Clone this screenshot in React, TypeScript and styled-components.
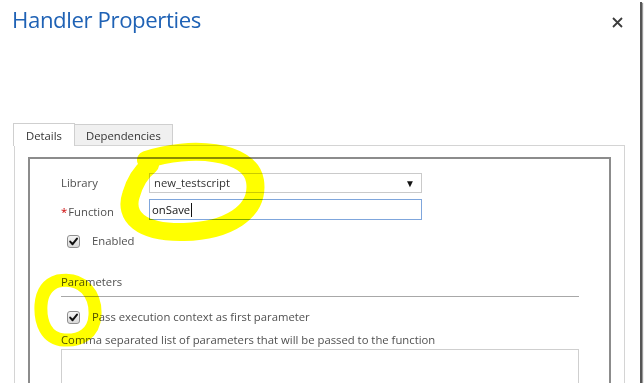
import styled, { createGlobalStyle } from "styled-components";

const GlobalStyle = createGlobalStyle`
   html, body {
      margin: 0;
      padding: 0;
      background: #ffffff;
   }
   body {
      font-family: "Open Sans", "Liberation Sans", sans-serif;
      color: #444444;
   }
`;

function CheckMark() {
   return (
      <svg width="11" height="11" viewBox="0 0 11 11">
         <path
            d="M2.2 5.6 L4.6 8.2 L9 2.6"
            fill="none"
            stroke="#111"
            strokeWidth="2"
            strokeLinecap="round"
            strokeLinejoin="round"
         />
      </svg>
   );
}

function CheckBox() {
   return (
      <Box>
         <CheckMark />
      </Box>
   );
}

function App() {
   return (
      <>
         <GlobalStyle />
         <Frame>
            <Header>
               <Title>Handler Properties</Title>
               <CloseButton aria-label="close">
                  <svg width="11" height="11" viewBox="0 0 11 11">
                     <path
                        d="M1 1 L10 10 M10 1 L1 10"
                        stroke="#3c3c3c"
                        strokeWidth="1.8"
                     />
                  </svg>
               </CloseButton>
            </Header>

            <Tabs>
               <Tab $active>Details</Tab>
               <Tab>Dependencies</Tab>
            </Tabs>

            <TabPanel>
               <Section>
                  <FieldRow>
                     <Label>Library</Label>
                     <Select>
                        <span>new_testscript</span>
                        <Arrow>▼</Arrow>
                     </Select>
                  </FieldRow>
                  <FieldRow>
                     <Label $low>
                        <Required>*</Required>Function
                     </Label>
                     <TextInput>
                        onSave
                        <Caret />
                     </TextInput>
                  </FieldRow>
                  <CheckRow>
                     <CheckBox />
                     <span>Enabled</span>
                  </CheckRow>

                  <Heading>Parameters</Heading>
                  <CheckRow $tight>
                     <CheckBox />
                     <span>Pass execution context as first parameter</span>
                  </CheckRow>
                  <Hint>
                     Comma separated list of parameters that will be passed to
                     the function
                  </Hint>
                  <TextArea />
               </Section>
            </TabPanel>

            <Marker width="640" height="383" viewBox="0 0 640 383">
               <path
                  d="M146 160 C 190 145, 250 150, 255 181 C 260 213, 226 231, 184 232 C 140 233, 124 216, 131 195 C 135 181, 141 172, 150 165"
                  fill="none"
                  stroke="#ffff00"
                  strokeWidth="18"
                  strokeLinecap="round"
                  strokeLinejoin="round"
               />
               <path
                  d="M58 281 C 84 276, 96 296, 95 315 C 94 334, 80 341, 64 340 C 46 339, 40 322, 41 305 C 42 292, 48 284, 58 281"
                  fill="none"
                  stroke="#ffff00"
                  strokeWidth="13"
                  strokeLinecap="round"
                  strokeLinejoin="round"
               />
            </Marker>
         </Frame>
      </>
   );
}

export default App;

const Frame = styled.div`
   position: relative;
   width: 640px;
   height: 383px;
   overflow: hidden;
   background: #ffffff;
   box-shadow: 2px 2px 0 #555555, 3px 3px 1px #9a9a9a;
`;

const Header = styled.div`
   display: flex;
   justify-content: space-between;
   align-items: flex-start;
   height: 123px;
   padding: 0 17px 0 12px;
   box-sizing: border-box;
`;

const Title = styled.h1`
   margin: 0;
   font-size: 22.2px;
   font-weight: 400;
   line-height: 39px;
   color: #1f62b5;
   letter-spacing: -0.4px;
`;

const CloseButton = styled.button`
   margin-top: 17px;
   padding: 0;
   border: none;
   background: none;
   width: 11px;
   height: 11px;
   line-height: 0;
`;

const Tabs = styled.div`
   display: flex;
   align-items: flex-end;
   margin-left: 13px;
   position: relative;
   z-index: 1;
`;

const Tab = styled.div<{ $active?: boolean }>`
   height: ${(p) => (p.$active ? "23px" : "21px")};
   padding: 0 ${(p) => (p.$active ? "12px" : "11px")};
   margin-bottom: ${(p) => (p.$active ? "-1px" : "0")};
   display: flex;
   align-items: center;
   font-size: 11.3px;
   color: #333333;
   background: ${(p) => (p.$active ? "#ffffff" : "#f0f0f0")};
   border: 1px solid #cfcfcf;
   border-bottom: none;
   border-left: ${(p) => (p.$active ? "1px solid #cfcfcf" : "none")};
   box-sizing: border-box;
`;

const TabPanel = styled.div`
   margin: 0 15px 0 14px;
   padding: 11px 13px 0 13px;
   border: 1px solid #d4d4d4;
   border-bottom: none;
   height: 300px;
`;

const Section = styled.div`
   border: 2px solid #8c8c8c;
   border-bottom: none;
   height: 300px;
   padding: 14px 30px 0 31px;
   font-size: 11.3px;
   line-height: 16px;
`;

const FieldRow = styled.div`
   display: grid;
   grid-template-columns: 88px 273px;
   align-items: center;
   margin-bottom: 6px;
`;

const Label = styled.label<{ $low?: boolean }>`
   color: #505050;
   padding-top: ${(p) => (p.$low ? "4px" : "0")};
`;

const Required = styled.span`
   color: #cc0000;
   margin-right: 1px;
`;

const Select = styled.div`
   height: 20px;
   box-sizing: border-box;
   border: 1px solid #cacaca;
   padding: 0 6px 0 4px;
   display: flex;
   align-items: center;
   justify-content: space-between;
   color: #333333;
`;

const Arrow = styled.span`
   font-size: 10px;
   color: #111111;
`;

const TextInput = styled.div`
   height: 21px;
   box-sizing: border-box;
   border: 1px solid #7fa6dc;
   padding: 0 2px;
   display: flex;
   align-items: center;
   color: #111111;
`;

const Caret = styled.span`
   display: inline-block;
   width: 1px;
   height: 14px;
   background: #111111;
   margin-left: 1px;
`;

const CheckRow = styled.div<{ $tight?: boolean }>`
   display: flex;
   align-items: center;
   gap: 12px;
   padding-left: 6px;
   margin-top: ${(p) => (p.$tight ? "12px" : "13px")};
   color: #505050;
`;

const Box = styled.span`
   width: 13px;
   height: 13px;
   box-sizing: border-box;
   border: 1px solid #8f8f8f;
   border-radius: 3px;
   background: linear-gradient(#f6f6f6, #d9d9d9);
   display: flex;
   align-items: center;
   justify-content: center;
`;

const Heading = styled.div`
   margin-top: 25px;
   width: 518px;
   padding-bottom: 6px;
   border-bottom: 1px solid #a8a8a8;
   color: #505050;
`;

const Hint = styled.div`
   margin-top: 7px;
   color: #505050;
`;

const TextArea = styled.div`
   margin-top: 1px;
   width: 518px;
   height: 60px;
   box-sizing: border-box;
   border: 1px solid #cfcfcf;
`;

const Marker = styled.svg`
   position: absolute;
   left: 0;
   top: 0;
   pointer-events: none;
   mix-blend-mode: multiply;
   z-index: 2;
`;
